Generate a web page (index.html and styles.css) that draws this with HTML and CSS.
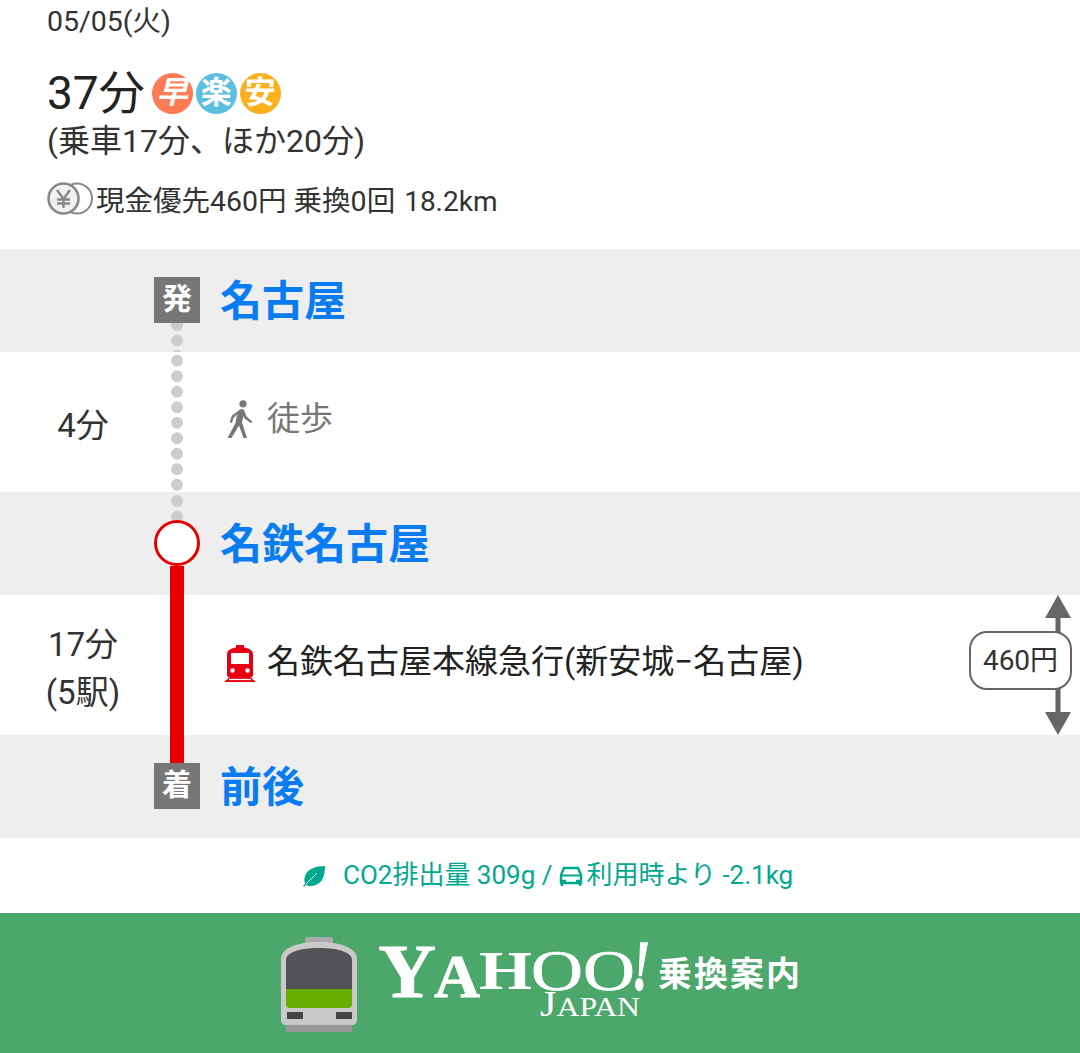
FILE: index.html
```html
<!DOCTYPE html>
<html lang="ja">
<head>
<meta charset="utf-8">
<title>乗換案内</title>
<link rel="stylesheet" href="styles.css">
</head>
<body>
<main class="page">
  <section class="summary">
    <div class="date">05/05(火)</div>
    <div class="total">
      <span class="total-time">37分</span>
      <span class="badges">
        <span class="badge badge-fast">早</span>
        <span class="badge badge-easy">楽</span>
        <span class="badge badge-cheap">安</span>
      </span>
    </div>
    <div class="breakdown">(乗車17分、ほか20分)</div>
    <div class="fareline">
      <svg class="yen" viewBox="0 0 46 33" aria-hidden="true">
        <circle cx="30" cy="16.5" r="15" fill="none" stroke="#888" stroke-width="2"/>
        <circle cx="16.5" cy="16.5" r="15" fill="#f1f1f1" stroke="#888" stroke-width="2.6"/>
        <path d="M10 8l6.500 9 6.500-9M16.500 17v9M10 17.500h13M10 21.500h13" fill="none" stroke="#888" stroke-width="2.400"/>
      </svg>
      <span>現金優先460円 乗換0回</span>
      <span class="distance">18.2km</span>
    </div>
  </section>

  <section class="row station">
    <div class="time"></div>
    <div class="spine">
      <div class="spine-top"></div>
      <div class="node node-square">発</div>
      <div class="spine-rest dots dots-start"></div>
    </div>
    <div class="station-name">名古屋</div>
  </section>

  <section class="row leg">
    <div class="time">4分</div>
    <div class="spine dots dots-walk"></div>
    <div class="leg-info leg-walk">
      <svg class="walk-icon" viewBox="0 0 26 39" aria-hidden="true">
        <circle cx="16" cy="3.800" r="3.600" fill="#777"/>
        <path d="M13 9.500c2.500-1 4 0 4.500 1.500l2 5.500 6 5-1.500 1.800-6.500-4.800-1-2.500-1.500 6.500 5 15.500h-3.500l-4.500-12.500-7.500 12.500H0.500l8-15 1.500-8.500-3.500 3.500-1.500 5-2.300-.8 2-6.500z" fill="#777"/>
      </svg>
      <span>徒歩</span>
    </div>
  </section>

  <section class="row station">
    <div class="time"></div>
    <div class="spine">
      <div class="spine-top dots dots-arrive"></div>
      <div class="node node-circle"></div>
      <div class="spine-rest rail"></div>
    </div>
    <div class="station-name">名鉄名古屋</div>
  </section>

  <section class="row leg">
    <div class="time">17分<br>(5駅)</div>
    <div class="spine rail"></div>
    <div class="leg-info leg-train">
      <svg class="train-icon" viewBox="0 0 32 37" aria-hidden="true">
        <path d="M3 9c0-4 5-6 9-6.500V0h8v2.500c4 .5 9 2.500 9 6.500v21c0 1.500-1 2.500-2.500 2.500h-21C4 32.500 3 31.500 3 30z" fill="#e60012"/>
        <rect x="7" y="8" width="18" height="11" fill="#fff"/>
        <circle cx="8.500" cy="25.500" r="2.200" fill="#fff"/>
        <circle cx="23.500" cy="25.500" r="2.200" fill="#fff"/>
        <path d="M6 32h20l6 5H0z" fill="#e60012"/>
        <path d="M5 34.500h22" stroke="#fff" stroke-width="1.200"/>
      </svg>
      <span>名鉄名古屋本線急行(新安城−名古屋)</span>
    </div>
    <div class="fare">
      <svg class="fare-arrow" viewBox="0 0 28 140" aria-hidden="true">
        <path d="M14 0L27 23H16.500V117H27L14 140 1 117H11.500V23H1z" fill="#666"/>
      </svg>
      <div class="fare-bubble">460円</div>
    </div>
  </section>

  <section class="row station">
    <div class="time"></div>
    <div class="spine">
      <div class="spine-top rail"></div>
      <div class="node node-square">着</div>
      <div class="spine-rest"></div>
    </div>
    <div class="station-name">前後</div>
  </section>

  <section class="eco">
    <svg class="leaf" viewBox="0 0 22 22" aria-hidden="true">
      <path d="M22 0C22 12 18 20 7 20c-1.500 0-3-.5-4-1.500L1 21l-1-.7 2.300-2.900C1 15.500 1 13 2 10 4 3 13 0 22 0z" fill="#00a88f"/>
      <path d="M3 18L14 7" stroke="#fff" stroke-width="1"/>
    </svg>
    <span class="eco-text">CO2排出量 309g /</span>
    <svg class="car" viewBox="0 0 24 20" aria-hidden="true">
      <path d="M5 2h14l3 7v8H2V9z" fill="none" stroke="#00a88f" stroke-width="2.400"/>
      <path d="M2 9.500h20" stroke="#00a88f" stroke-width="2"/>
      <path d="M2 15h5M17 15h5M3 17v3M21 17v3" stroke="#00a88f" stroke-width="2.400"/>
    </svg>
    <span>利用時より -2.1kg</span>
  </section>

  <footer class="brand">
    <svg class="brand-logo" viewBox="0 0 540 100" role="img" aria-label="Yahoo! Japan 乗換案内">
      <rect x="35" y="4" width="28" height="10" rx="2" fill="#aaa"/>
      <rect x="16" y="88" width="66" height="11" fill="#999"/>
      <path d="M11 26c0-10 14-17 38-17s38 7 38 17v61c0 3-2 5-5 5H16c-3 0-5-2-5-5z" fill="#c9c9c9"/>
      <path d="M16 27c0-7 12-12 33-12s33 5 33 12v29H16z" fill="#555257"/>
      <path d="M16 56h66v15c0 3-2 4-4 4H20c-2 0-4-1-4-4z" fill="#66ad00"/>
      <rect x="17" y="79" width="16" height="7" fill="#444"/>
      <rect x="66" y="79" width="16" height="7" fill="#444"/>
      <g class="logo-type" fill="#fff">
        <text x="108" y="64" font-size="76" textLength="58" lengthAdjust="spacingAndGlyphs" class="logo-heavy">Y</text>
        <text x="164" y="64" font-size="62" textLength="46" lengthAdjust="spacingAndGlyphs" class="logo-heavy">A</text>
        <text x="209" y="56" font-size="54" textLength="53" lengthAdjust="spacingAndGlyphs">H</text>
        <text x="261" y="57" font-size="58" textLength="104" lengthAdjust="spacingAndGlyphs" class="logo-light">OO</text>
        <text x="362" y="57" font-size="72" textLength="18" lengthAdjust="spacingAndGlyphs" class="logo-bang">!</text>
        <text x="270" y="83" textLength="100" lengthAdjust="spacingAndGlyphs" class="logo-thin"><tspan font-size="36">J</tspan><tspan font-size="27">APAN</tspan></text>
      </g>
      <text x="388" y="53" class="logo-ja" font-size="34" textLength="142">乗換案内</text>
    </svg>
  </footer>
</main>
</body>
</html>
```
FILE: styles.css
```css
* { box-sizing: border-box; }

html, body {
  margin: 0;
  padding: 0;
  background: #fff;
}

.page {
  width: 1080px;
  height: 1053px;
  overflow: hidden;
  font-family: Roboto, "Noto Sans CJK JP", sans-serif;
  color: #222;
}

.summary {
  height: 249px;
  padding-left: 47px;
  display: flex;
  flex-direction: column;
}

.date {
  font-size: 28.500px;
  line-height: 44px;
  color: #333;
}

.total {
  margin-top: 25px;
  height: 48px;
  display: flex;
  align-items: center;
  gap: 7px;
}

.total-time {
  font-size: 46px;
  line-height: 48px;
}

.badges {
  display: flex;
  gap: 3px;
}

.badge {
  width: 41px;
  height: 41px;
  border-radius: 50%;
  color: #fff;
  font-size: 31px;
  font-weight: 700;
  line-height: 40px;
  text-align: center;
}

.badge-fast { background: #fd7b55; font-style: italic; }
.badge-easy { background: #5cbfe0; }
.badge-cheap { background: #fbb01d; }

.breakdown {
  font-size: 32px;
  line-height: 48px;
  color: #333;
}

.fareline {
  margin-top: 13px;
  height: 40px;
  display: flex;
  align-items: center;
  font-size: 28.500px;
  color: #333;
}

.yen {
  width: 46px;
  height: 33px;
  margin-right: 3px;
}

.distance {
  margin-left: 9px;
  position: relative;
  top: 3px;
  font-size: 28px;
}

.row {
  display: grid;
  grid-template-columns: 154px 46px 1fr;
}

.station {
  height: 103px;
  background: #eee;
}

.leg {
  height: 140px;
  background: #fff;
}

.leg:has(.fare) {
  grid-template-columns: 154px 46px 1fr 111px;
}

.time {
  font-size: 33px;
  line-height: 48px;
  text-align: center;
  padding-left: 12px;
  padding-top: 8px;
  align-self: center;
  color: #333;
}

.spine {
  display: flex;
  flex-direction: column;
  position: relative;
}

.spine-top {
  height: 28px;
}

.spine-rest {
  flex: 1;
}

.node {
  width: 46px;
  height: 46px;
  flex: none;
}

.node-square {
  background: #777;
  color: #fff;
  font-size: 30px;
  font-weight: 700;
  line-height: 44px;
  text-align: center;
}

.node-circle {
  background: #fff;
  border: 3px solid #e60000;
  border-radius: 50%;
}

.rail {
  background: linear-gradient(#e60000, #e60000) center / 14px 100% no-repeat;
}

.dots {
  background-image: radial-gradient(circle at center, #ccc 5.500px, transparent 6.200px);
  background-size: 14px 15.500px;
  background-repeat: repeat-y;
}

.dots-start { background-position: center -5.750px; }
.dots-walk { background-position: center 1px; }
.dots-arrive { background-position: center 1.250px; }

.station-name {
  padding: 0 0 0 20px;
  margin-top: 24px;
  font-size: 42px;
  line-height: 58px;
  font-weight: 700;
  color: #0a7cf2;
}

.leg-info {
  display: flex;
  align-items: center;
  padding-left: 24px;
  font-size: 33px;
  padding-bottom: 12px;
}

.leg-walk {
  color: #777;
}

.leg-train {
  color: #222;
}

.walk-icon {
  width: 26px;
  height: 39px;
  margin-left: 3px;
  margin-right: 14px;
  margin-top: 6px;
}

.train-icon {
  width: 32px;
  height: 37px;
  margin-right: 11px;
  margin-top: 8px;
}

.fare {
  display: flex;
  align-items: center;
  position: relative;
}

.fare-arrow {
  position: absolute;
  right: 8px;
  top: 0;
  width: 28px;
  height: 140px;
}

.fare-bubble {
  position: relative;
  width: 103px;
  height: 59px;
  margin-top: -9px;
  border: 2px solid #666;
  border-radius: 18px;
  background: #fff;
  font-size: 28px;
  line-height: 55px;
  text-align: center;
  color: #333;
}

.eco {
  height: 75px;
  padding-left: 303px;
  padding-bottom: 6px;
  display: flex;
  align-items: center;
  font-size: 26px;
  color: #00a88f;
}

.leaf {
  width: 22px;
  height: 22px;
  margin-right: 18px;
  margin-top: 8px;
}

.car {
  width: 24px;
  height: 20px;
  margin: 6px 4px 0 6px;
}

.brand {
  height: 140px;
  background: #4ca76b;
  display: flex;
  align-items: center;
  justify-content: center;
}

.brand-logo {
  width: 540px;
  height: 100px;
}

.logo-type text {
  font-family: "Liberation Serif", serif;
  font-weight: 700;
}

.logo-type .logo-light {
  font-weight: 400;
  stroke: #fff;
  stroke-width: 0.6px;
}

.logo-type .logo-thin {
  font-weight: 400;
}

.logo-type .logo-heavy {
  stroke: #fff;
  stroke-width: 0.8px;
}

.logo-type .logo-bang {
  font-style: italic;
  stroke: #fff;
  stroke-width: 1.5px;
}

.logo-ja {
  font-family: "Noto Sans CJK JP", sans-serif;
  font-weight: 700;
  fill: #fff;
}
```
